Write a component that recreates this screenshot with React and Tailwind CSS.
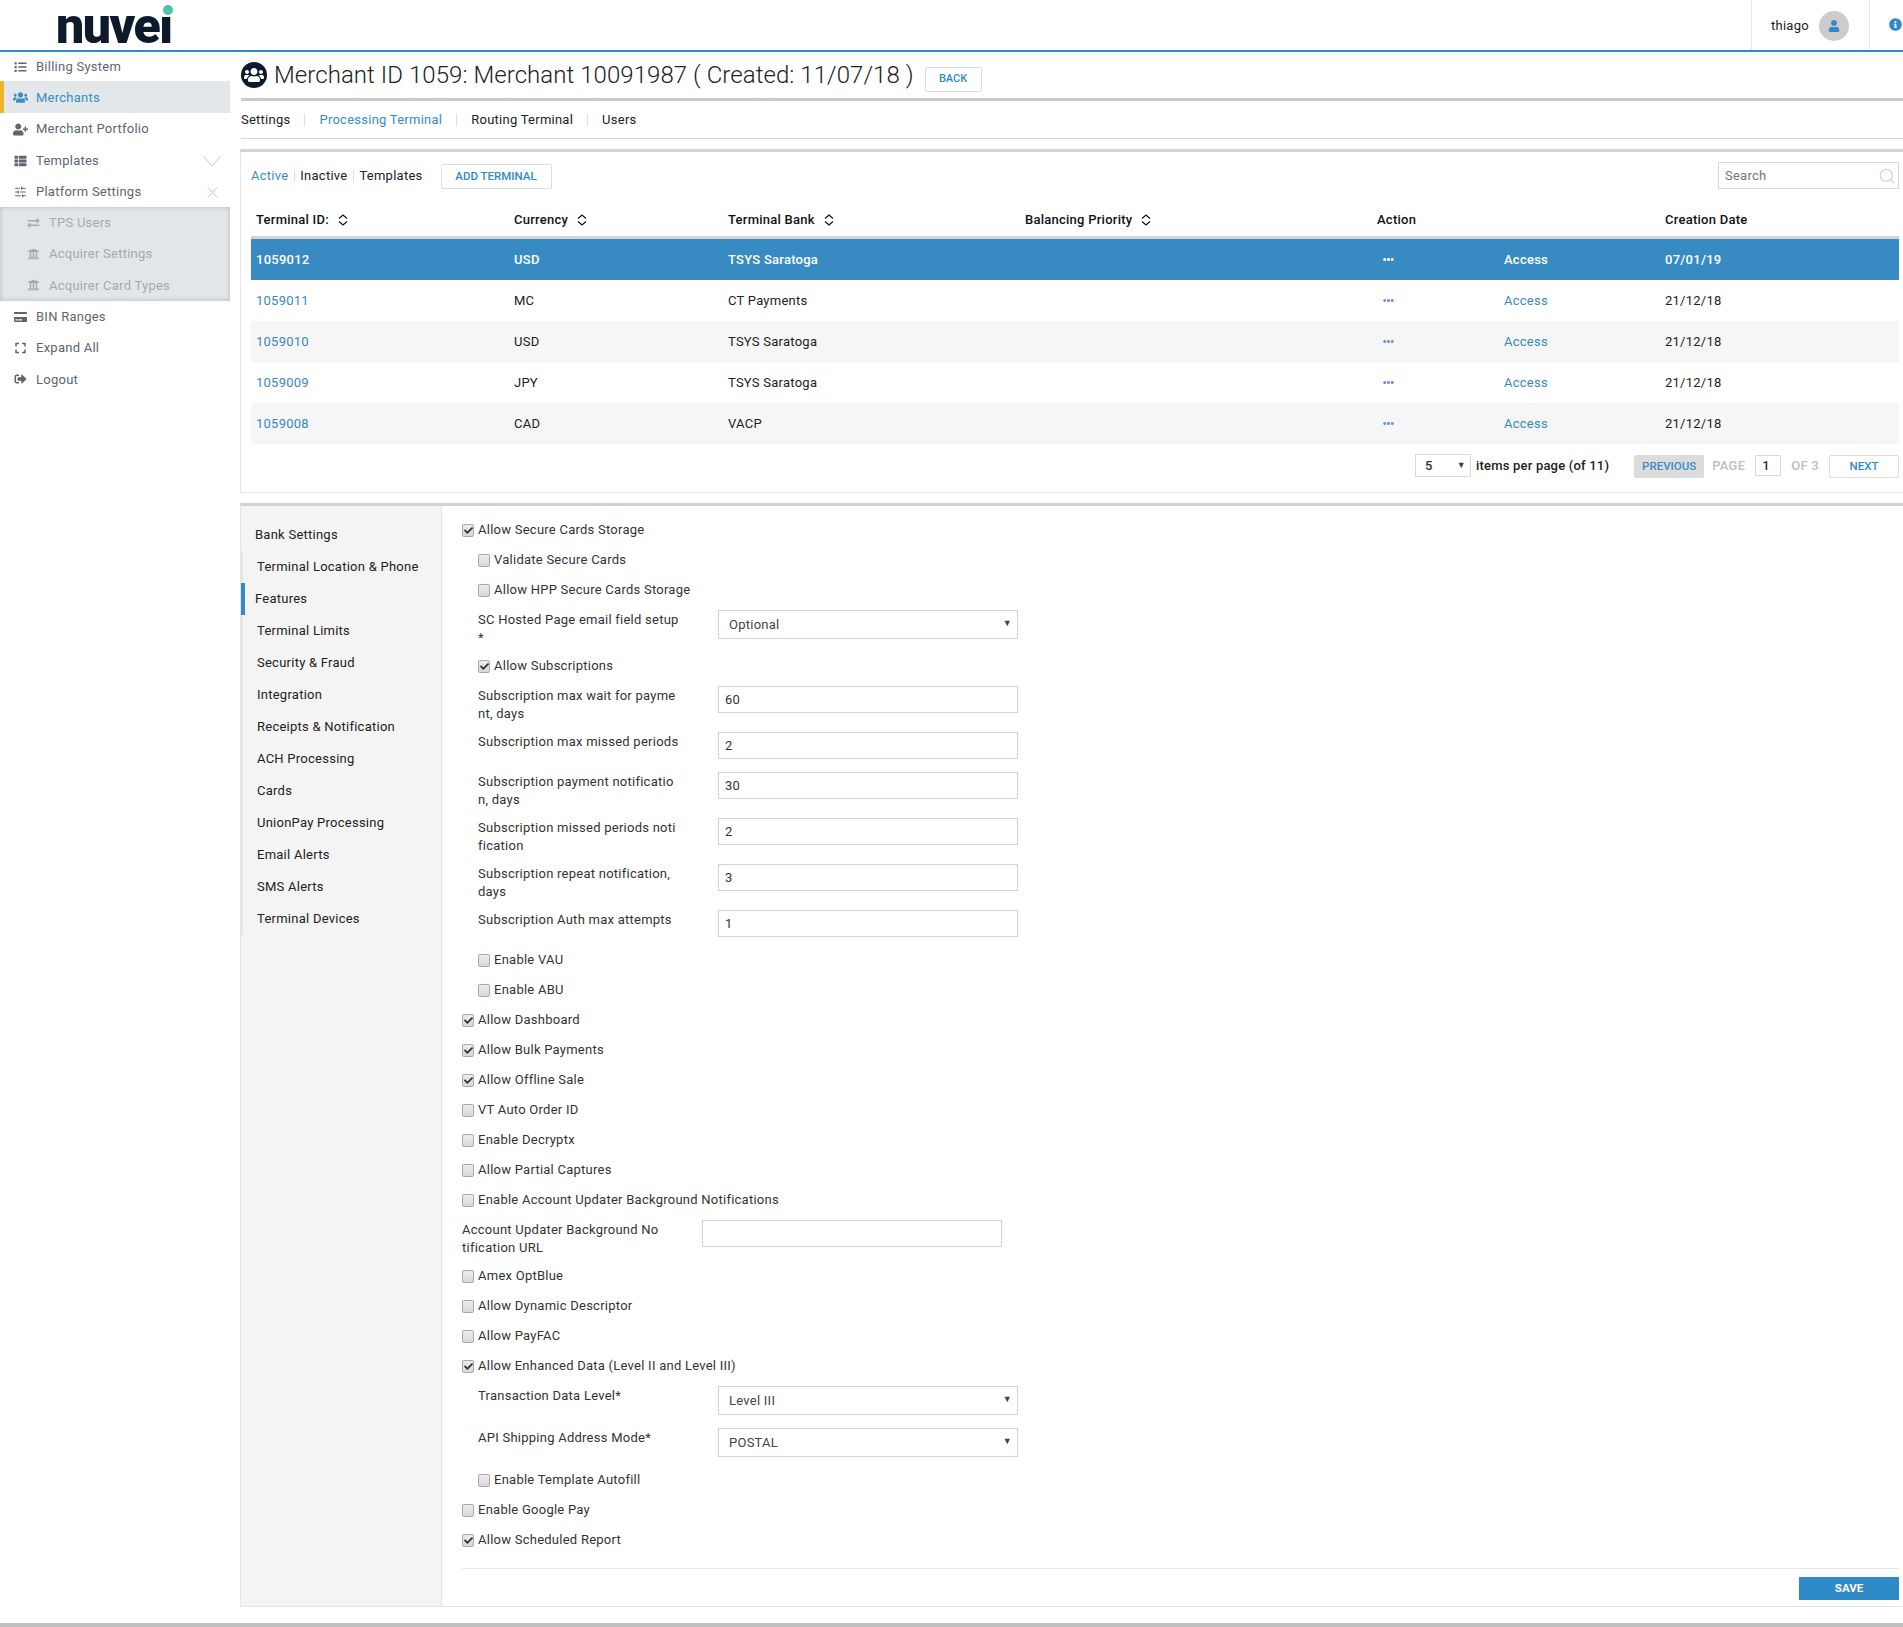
import React from "react";
import {
  FaList,
  FaUsers,
  FaUserPlus,
  FaThList,
  FaExchangeAlt,
  FaUniversity,
  FaCreditCard,
  FaExpand,
  FaSignOutAlt,
  FaUser,
  FaInfoCircle,
  FaCheck,
  FaEllipsisH,
} from "react-icons/fa";
import { Search, SlidersHorizontal } from "lucide-react";

const wideIcon = "-ml-[1px] mr-[-1px] h-[13px] w-[15px]";

const menuTop = [
  { label: "Billing System", icon: FaList, h: "h-[29px]" },
  { label: "Merchants", icon: FaUsers, h: "h-[32px]", active: true, iconClass: wideIcon },
  { label: "Merchant Portfolio", icon: FaUserPlus, h: "h-[32px]", iconClass: wideIcon },
  { label: "Templates", icon: FaThList, h: "h-[32px]", right: "chevron" },
  { label: "Platform Settings", icon: SlidersHorizontal, h: "h-[30px]", right: "x", iconClass: "h-[14px] w-[13px]" },
];
const menuSub = [
  { label: "TPS Users", icon: FaExchangeAlt },
  { label: "Acquirer Settings", icon: FaUniversity },
  { label: "Acquirer Card Types", icon: FaUniversity },
];
const menuBottom = [
  { label: "BIN Ranges", icon: FaCreditCard },
  { label: "Expand All", icon: FaExpand },
  { label: "Logout", icon: FaSignOutAlt },
];

const rows = [
  { id: "1059012", cur: "USD", bank: "TSYS Saratoga", date: "07/01/19", selected: true },
  { id: "1059011", cur: "MC", bank: "CT Payments", date: "21/12/18" },
  { id: "1059010", cur: "USD", bank: "TSYS Saratoga", date: "21/12/18", shaded: true },
  { id: "1059009", cur: "JPY", bank: "TSYS Saratoga", date: "21/12/18" },
  { id: "1059008", cur: "CAD", bank: "VACP", date: "21/12/18", shaded: true },
];

const sideNav = [
  "Bank Settings",
  "Terminal Location & Phone",
  "Features",
  "Terminal Limits",
  "Security & Fraud",
  "Integration",
  "Receipts & Notification",
  "ACH Processing",
  "Cards",
  "UnionPay Processing",
  "Email Alerts",
  "SMS Alerts",
  "Terminal Devices",
];

const tableCols = "grid grid-cols-[258px_214px_297px_352px_127px_161px_239px]";

const SortIcon = () => (
  <svg className="ml-[9px]" width="10" height="12" viewBox="0 0 10 12" fill="none" stroke="currentColor" strokeWidth="1.2">
    <polyline points="1,4.5 5,1 9,4.5" />
    <polyline points="1,7.5 5,11 9,7.5" />
  </svg>
);

const SideItem = ({ item }) => {
  const Icon = item.icon;
  return (
    <div
      className={`flex items-center pr-[9px] ${item.h || "h-[31.33px]"} ${
        item.active ? "border-l-[4px] border-[#f0b429] bg-[#e3e7ea] pt-[1px] pl-[10px] text-[#3a8cc4]" : "pl-[14px] text-[#5c6670]"
      }`}
    >
      <Icon className={item.iconClass || "h-[12px] w-[13px]"} />
      <span className="ml-[9px]">{item.label}</span>
      {item.right === "chevron" && (
        <svg className="ml-auto" width="18" height="11" viewBox="0 0 18 11" fill="none" stroke="#c5c8cb">
          <polyline points="0.5,0.5 9,10 17.5,0.5" />
        </svg>
      )}
      {item.right === "x" && (
        <svg className="mr-[3px] ml-auto" width="11" height="11" viewBox="0 0 11 11" fill="none" stroke="#c5c8cb">
          <path d="M0.5 0.5 10.5 10.5 M10.5 0.5 0.5 10.5" />
        </svg>
      )}
    </div>
  );
};

const Checkbox = ({ checked }) => (
  <span className="flex h-[13px] w-[12px] shrink-0 items-center justify-center rounded-[2px] border border-[#aaa] bg-gradient-to-b from-[#ececec] to-[#d8d8d8]">
    {checked && <FaCheck className="text-[9px] text-[#333]" />}
  </span>
);

const CheckRow = ({ label, checked, nested }) => (
  <label className={`flex h-[30px] items-center ${nested ? "pl-[16px]" : ""}`}>
    <Checkbox checked={checked} />
    <span className="ml-[4px]">{label}</span>
  </label>
);

const FieldRow = ({ lines, children, nested }) => (
  <div className={`flex items-start pt-[5px] pb-[4px] ${nested ? "pl-[16px]" : ""}`}>
    <div className="mt-[1px] w-[240px] shrink-0 leading-[18px]">
      {lines.map((l) => (
        <div key={l}>{l}</div>
      ))}
    </div>
    {children}
  </div>
);

const TextField = ({ value }) => (
  <input
    readOnly
    defaultValue={value}
    className="mb-[4px] h-[27px] w-[300px] border border-[#d4d4d4] bg-white px-[6px] text-[13px] text-[#333] outline-none"
  />
);

const SelectField = ({ value }) => (
  <div className="relative mb-[4px] h-[29px] w-[300px]">
    <select
      defaultValue={value}
      className="h-full w-full appearance-none border border-[#d4d4d4] bg-white pl-[10px] text-[13px] text-[#444] outline-none"
    >
      <option>{value}</option>
    </select>
    <span className="absolute top-[7px] right-[6px] text-[9px] text-[#444]">▼</span>
  </div>
);

const App = () => {
  return (
    <div className="w-[1903px] overflow-hidden bg-white font-['Roboto',sans-serif] text-[13px] tracking-[0.25px] text-[#333]">
      {/* Top bar */}
      <header className="flex h-[52px] border-b-2 border-[#2e8bc8]">
        <div className="relative ml-[56px] h-[50px] w-[118px]">
          <span className="absolute top-[1px] left-0 text-[50px] leading-[50px] font-black tracking-[-1.5px] whitespace-nowrap text-[#0d1a2b]">
            nuve<span className="inline-block [clip-path:inset(16px_0_0_0)]">i</span>
          </span>
          <span className="absolute top-[5px] left-[107px] h-[9.5px] w-[9.5px] rounded-full bg-[#4cc3ac]" />
        </div>
        <div className="ml-auto flex">
          <div className="flex w-[119px] items-center border-x border-[#e8e8e8] pt-[1px] pl-[19px]">
            <span className="text-[#222]">thiago</span>
            <span className="ml-[10px] flex size-[30px] items-center justify-center rounded-full bg-[#ccc]">
              <FaUser className="text-[12px] text-[#2e8bc8]" />
            </span>
          </div>
          <div className="flex w-[33px] items-center justify-end pr-[1px] pb-[2px]">
            <FaInfoCircle className="text-[13px] text-[#2e8bc8]" />
          </div>
        </div>
      </header>

      <div className="flex">
        {/* Main menu */}
        <aside className="w-[230px] shrink-0">
          {menuTop.map((item) => (
            <SideItem key={item.label} item={item} />
          ))}
          <div className="bg-[#e3e6e8] pl-[13px] text-[#a8a8a8] shadow-[inset_0_0_5px_rgba(0,0,0,0.2)]">
            {menuSub.map((item) => (
              <SideItem key={item.label} item={{ ...item, h: "h-[31.33px] !text-[#a8a8a8]" }} />
            ))}
          </div>
          {menuBottom.map((item) => (
            <SideItem key={item.label} item={item} />
          ))}
        </aside>

        <main className="ml-[10px] min-w-0 flex-1">
          {/* Title */}
          <div className="ml-[1px] flex h-[46px] items-center">
            <span className="flex size-[26px] items-center justify-center rounded-full bg-[#0d1a2b]">
              <FaUsers className="text-[20px] text-white" />
            </span>
            <h1 className="ml-[7px] text-[24px] leading-none font-light tracking-[0.06px] text-[#222]">
              Merchant ID 1059: Merchant 10091987 ( Created: 11/07/18 )
            </h1>
            <button className="mt-[9px] ml-[11px] h-[25px] w-[57px] rounded-[2px] border border-[#ddd] text-[11px] font-medium tracking-normal text-[#2e8bc8]">
              BACK
            </button>
          </div>

          {/* Tabs */}
          <div className="ml-[1px] flex h-[41px] items-center border-t-[3px] border-b border-t-[#c8cbd0] border-b-[#d5d5d5]">
            <span className="text-[#222]">Settings</span>
            <span className="mx-[14px] h-[12px] w-px bg-[#e0e0e0]" />
            <span className="text-[#3a8cc4]">Processing Terminal</span>
            <span className="mx-[14px] h-[12px] w-px bg-[#e0e0e0]" />
            <span className="text-[#222]">Routing Terminal</span>
            <span className="mx-[14px] h-[12px] w-px bg-[#e0e0e0]" />
            <span className="text-[#222]">Users</span>
          </div>

          {/* Terminals */}
          <section className="mt-[10px] border-t-[3px] border-b border-l border-t-[#d3d3d3] border-b-[#e5e5e5] border-l-[#e5e5e5] pr-[4px] pb-[14px] pl-[10px]">
            <div className="mt-[12px] flex h-[25px] items-center">
              <div className="flex items-center pb-[2px]">
                <span className="text-[#3a8cc4]">Active</span>
                <span className="mx-[5.5px] h-[12px] w-px bg-[#e0e0e0]" />
                <span className="text-[#222]">Inactive</span>
                <span className="mx-[5.5px] h-[12px] w-px bg-[#e0e0e0]" />
                <span className="text-[#222]">Templates</span>
              </div>
              <button className="ml-[18px] h-[25px] w-[111px] rounded-[2px] border border-[#ddd] text-[11.5px] font-medium tracking-normal text-[#2e8bc8]">
                ADD TERMINAL
              </button>
              <div className="relative mb-[2px] ml-auto">
                <input
                  placeholder="Search"
                  className="h-[27px] w-[181px] border border-[#d9d9d9] px-[6px] text-[13px] outline-none placeholder:text-[#777]"
                />
                <Search className="absolute top-[5px] right-[3px] size-[18px] text-[#d0d0d0]" strokeWidth={1.5} />
              </div>
            </div>

            <div className={`${tableCols} h-[50px] items-center border-b-[3px] border-[#d5d5d5] pt-[15px] pl-[5px] font-medium text-[#111]`}>
              <div className="flex items-center">
                Terminal ID:
                <SortIcon />
              </div>
              <div className="flex items-center">
                Currency
                <SortIcon />
              </div>
              <div className="flex items-center">
                Terminal Bank
                <SortIcon />
              </div>
              <div className="flex items-center">
                Balancing Priority
                <SortIcon />
              </div>
              <div>Action</div>
              <div />
              <div>Creation Date</div>
            </div>

            {rows.map((r) => (
              <div
                key={r.id}
                className={`${tableCols} h-[41px] items-center pl-[5px] ${
                  r.selected ? "bg-[#388bc2] font-medium text-white" : r.shaded ? "bg-[#f6f6f6] text-[#222]" : "text-[#222]"
                }`}
              >
                <div className={r.selected ? "" : "text-[#3a87c0]"}>{r.id}</div>
                <div>{r.cur}</div>
                <div>{r.bank}</div>
                <div />
                <div className="pl-[6px]">
                  <FaEllipsisH className={`text-[11px] ${r.selected ? "text-white" : "text-[#6f93e0]"}`} />
                </div>
                <div className={r.selected ? "" : "text-[#3a87c0]"}>Access</div>
                <div>{r.date}</div>
              </div>
            ))}

            <div className="mt-[10px] flex items-start justify-end font-medium">
              <div className="relative h-[23px] w-[56px] border border-[#d9d9d9] pl-[9px] leading-[21px] text-[#333]">
                5
                <span className="absolute top-[0px] right-[4px] text-[9px] text-[#444]">▼</span>
              </div>
              <span className="ml-[5px] leading-[23px] tracking-[0.2px] text-[#222]">items per page (of 11)</span>
              <button className="mt-[1px] ml-[25px] h-[23px] w-[70px] rounded-[2px] bg-[#dcdcdc] text-[11.5px] tracking-normal text-[#3a8cc4]">
                PREVIOUS
              </button>
              <span className="ml-[8px] leading-[24px] text-[#c0c0c0]">PAGE</span>
              <span className="mt-[1px] ml-[10px] h-[21px] w-[26px] border border-[#d9d9d9] pl-[6px] leading-[19px] text-[#333]">1</span>
              <span className="ml-[10px] leading-[24px] text-[#c0c0c0]">OF 3</span>
              <button className="mt-[1px] ml-[10px] h-[23px] w-[70px] rounded-[2px] border border-[#ddd] text-[11.5px] tracking-normal text-[#2e8bc8]">
                NEXT
              </button>
            </div>
          </section>

          {/* Settings */}
          <section className="mt-[10px] flex border-t-[3px] border-b border-l border-t-[#d3d3d3] border-b-[#e5e5e5] border-l-[#e5e5e5]">
            <nav className="w-[201px] shrink-0 border-r border-[#e5e5e5] bg-[#f4f4f4] pt-[13px] text-[#222]">
              {sideNav.map((name, i) => (
                <div
                  key={name}
                  className={`flex h-[32px] items-center ${
                    i === 0 ? "pl-[14px]" : name === "Features" ? "border-l-[4px] border-[#2e8bc8] pl-[10px]" : "border-l-2 border-[#e5e5e5] pl-[14px]"
                  }`}
                >
                  {name}
                </div>
              ))}
            </nav>

            <form className="min-w-0 flex-1 pt-[9px] pr-[4px] pl-[20px]">
              <CheckRow checked label="Allow Secure Cards Storage" />
              <CheckRow nested label="Validate Secure Cards" />
              <CheckRow nested label="Allow HPP Secure Cards Storage" />
              <FieldRow nested lines={["SC Hosted Page email field setup", "*"]}>
                <SelectField value="Optional" />
              </FieldRow>
              <CheckRow nested checked label="Allow Subscriptions" />
              <FieldRow nested lines={["Subscription max wait for payme", "nt, days"]}>
                <TextField value="60" />
              </FieldRow>
              <FieldRow nested lines={["Subscription max missed periods"]}>
                <TextField value="2" />
              </FieldRow>
              <FieldRow nested lines={["Subscription payment notificatio", "n, days"]}>
                <TextField value="30" />
              </FieldRow>
              <FieldRow nested lines={["Subscription missed periods noti", "fication"]}>
                <TextField value="2" />
              </FieldRow>
              <FieldRow nested lines={["Subscription repeat notification,", "days"]}>
                <TextField value="3" />
              </FieldRow>
              <FieldRow nested lines={["Subscription Auth max attempts"]}>
                <TextField value="1" />
              </FieldRow>
              <CheckRow nested label="Enable VAU" />
              <CheckRow nested label="Enable ABU" />
              <CheckRow checked label="Allow Dashboard" />
              <CheckRow checked label="Allow Bulk Payments" />
              <CheckRow checked label="Allow Offline Sale" />
              <CheckRow label="VT Auto Order ID" />
              <CheckRow label="Enable Decryptx" />
              <CheckRow label="Allow Partial Captures" />
              <CheckRow label="Enable Account Updater Background Notifications" />
              <FieldRow lines={["Account Updater Background No", "tification URL"]}>
                <TextField value="" />
              </FieldRow>
              <CheckRow label="Amex OptBlue" />
              <CheckRow label="Allow Dynamic Descriptor" />
              <CheckRow label="Allow PayFAC" />
              <CheckRow checked label="Allow Enhanced Data (Level II and Level III)" />
              <FieldRow nested lines={["Transaction Data Level*"]}>
                <SelectField value="Level III" />
              </FieldRow>
              <FieldRow nested lines={["API Shipping Address Mode*"]}>
                <SelectField value="POSTAL" />
              </FieldRow>
              <CheckRow nested label="Enable Template Autofill" />
              <CheckRow label="Enable Google Pay" />
              <CheckRow checked label="Allow Scheduled Report" />
              <div className="mt-[13px] flex h-[38px] justify-end border-t border-[#e5e5e5] pt-[8px]">
                <button className="h-[23px] w-[100px] bg-[#2e8bc8] text-[11.5px] font-bold tracking-normal text-white">SAVE</button>
              </div>
            </form>
          </section>
        </main>
      </div>

      <footer className="mt-[16px] h-[4px] bg-[#c0c0c0]" />
    </div>
  );
};

export default App;
